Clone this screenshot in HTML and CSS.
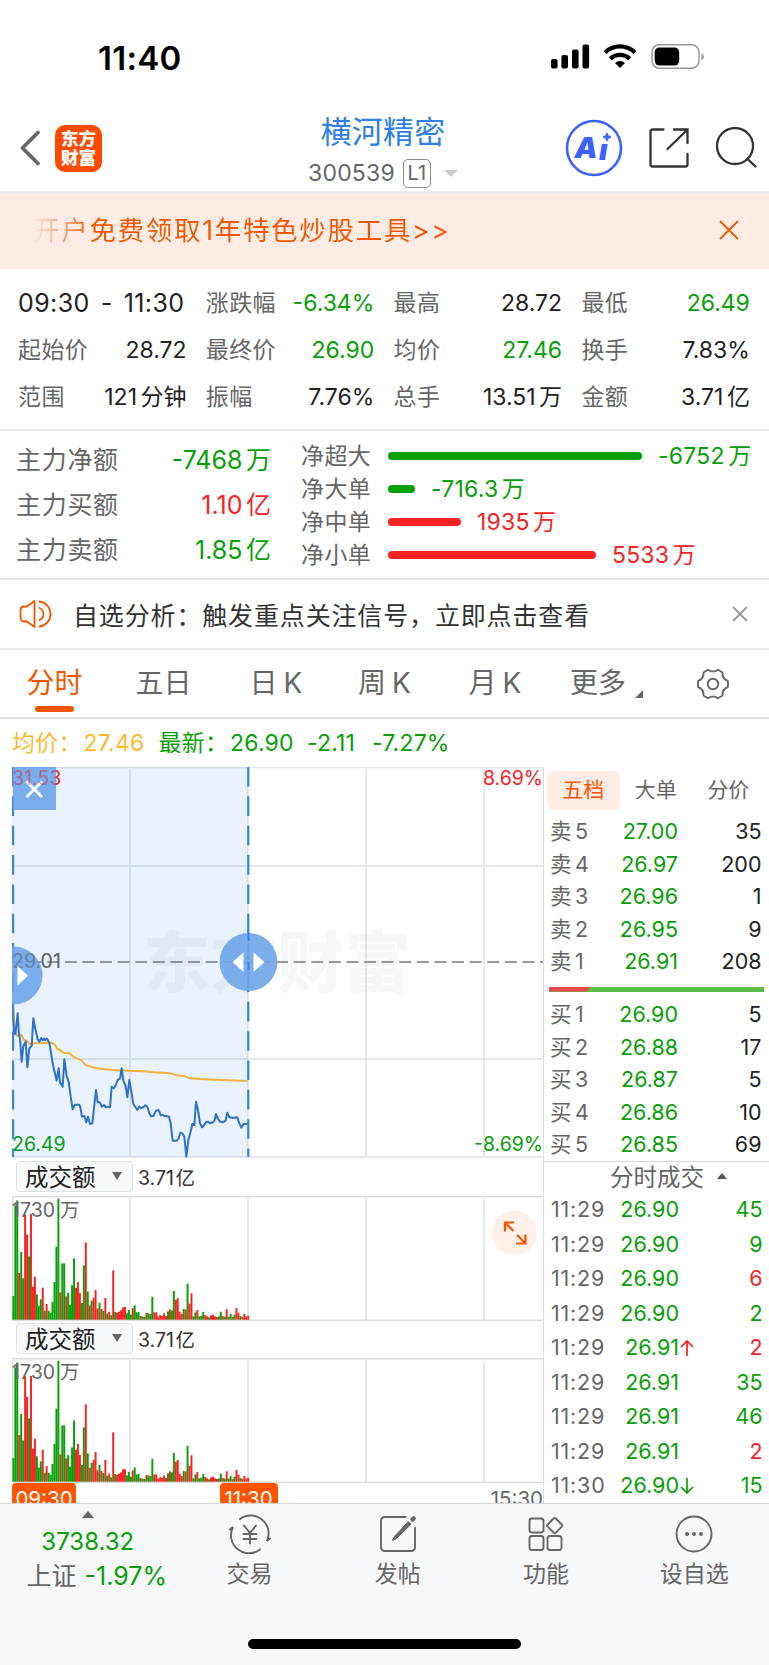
FILE: index.html
```html
<!DOCTYPE html>
<html lang="zh-CN">
<head>
  <meta charset="UTF-8" />
  <meta name="viewport" content="width=device-width, initial-scale=1.0"/>
  <title>横河精密 300539</title>
  <link rel="stylesheet" href="styles.css">
</head>
<body>
  <div class="status-bar">
    <span class="clock">11:40</span>
    <svg class="status-icons" width="154" height="26" viewBox="0 0 154 26">
      <rect x="0" y="15" width="6.6" height="9.5" rx="2"/>
      <rect x="10.4" y="11" width="6.6" height="13.5" rx="2"/>
      <rect x="21" y="5.5" width="6.6" height="19" rx="2"/>
      <rect x="31.5" y="0.5" width="6.6" height="24" rx="2"/>
      <g fill="none" stroke="#000" stroke-width="4.2">
        <path d="M54 8.500a21.500 21.500 0 0 1 30 0"/>
        <path d="M59.200 14.800a14 14 0 0 1 19.600 0"/>
      </g>
      <path d="M69 24l-5-5a7.300 7.300 0 0 1 10 0z"/>
      <rect x="101" y="0.7" width="47" height="23.6" rx="7.5" fill="none" stroke="#999" stroke-width="1.5"/>
      <rect x="103.7" y="3.4" width="24.5" height="18.2" rx="5"/>
      <path d="M150.500 9v7.500q2.500-1.200 2.500-3.700t-2.500-3.800z" fill="#999"/>
    </svg>
  </div>

  <div class="header">
    <div class="header-left">
      <svg width="22" height="36" viewBox="0 0 22 36"><path d="M19 2.500L3.500 18l15.500 15.500" fill="none" stroke="#666" stroke-width="3.6" stroke-linecap="round" stroke-linejoin="round"/></svg>
      <div class="logo">东方<br>财富</div>
    </div>
    <div class="header-title">
      <div class="stock-name">横河精密</div>
      <div class="stock-code">300539<span class="level">L1</span><i class="tri-down"></i></div>
    </div>
    <div class="header-right">
      <svg width="58" height="58" viewBox="0 0 58 58">
        <circle cx="29" cy="29" r="27" fill="none" stroke="#3a63ff" stroke-width="2.6"/>
        <text x="9.5" y="39" class="ai-text">A</text>
        <text x="34" y="40.5" class="ai-text">ı</text>
        <path d="M42 14l1.300 2.700 2.700 1.300-2.700 1.300-1.300 2.700-1.300-2.700-2.700-1.300 2.700-1.300z" fill="#3a63ff" stroke="#3a63ff"/>
      </svg>
      <svg width="42" height="42" viewBox="0 0 42 42" fill="none" stroke="#333" stroke-width="2.3" stroke-linecap="round">
        <path d="M15.500 2.500H4.500q-2 0-2 2v33q0 2 2 2h33q2 0 2-2V27"/>
        <path d="M26 2.500h13.500v13.500M39 3L19.500 22"/>
      </svg>
      <svg width="42" height="42" viewBox="0 0 42 42" fill="none" stroke="#333" stroke-width="2.3" stroke-linecap="round">
        <circle cx="20" cy="19" r="18"/><path d="M32.500 32l8 7.500"/>
      </svg>
    </div>
  </div>

  <div class="promo">
    <span class="promo-text">开户免费领取1年特色炒股工具&gt;&gt;</span>
    <svg width="20" height="20" viewBox="0 0 20 20"><path d="M1 1l18 18M19 1L1 19" stroke="#f25700" stroke-width="1.8"/></svg>
  </div>

  <div class="stats">
    <div class="stat range"><b>09:30</b><b>-</b><b>11:30</b></div>
    <div class="stat"><span>涨跌幅</span><b class="down">-6.34%</b></div>
    <div class="stat"><span>最高</span><b>28.72</b></div>
    <div class="stat"><span>最低</span><b class="down">26.49</b></div>
    <div class="stat"><span>起始价</span><b>28.72</b></div>
    <div class="stat"><span>最终价</span><b class="down">26.90</b></div>
    <div class="stat"><span>均价</span><b class="down">27.46</b></div>
    <div class="stat"><span>换手</span><b>7.83%</b></div>
    <div class="stat"><span>范围</span><b>121<em>分钟</em></b></div>
    <div class="stat"><span>振幅</span><b>7.76%</b></div>
    <div class="stat"><span>总手</span><b>13.51<em>万</em></b></div>
    <div class="stat"><span>金额</span><b>3.71<em>亿</em></b></div>
  </div>

  <div class="funds">
    <div class="main-funds">
      <div class="fund"><span>主力净额</span><b class="down">-7468<em>万</em></b></div>
      <div class="fund"><span>主力买额</span><b class="up">1.10<em>亿</em></b></div>
      <div class="fund"><span>主力卖额</span><b class="down">1.85<em>亿</em></b></div>
    </div>
    <div class="net-funds">
      <div class="net down"><span>净超大</span><i style="width:254px"></i><b>-6752<em>万</em></b></div>
      <div class="net down"><span>净大单</span><i style="width:27px"></i><b>-716.3<em>万</em></b></div>
      <div class="net up"><span>净中单</span><i style="width:73px"></i><b>1935<em>万</em></b></div>
      <div class="net up"><span>净小单</span><i style="width:208px"></i><b>5533<em>万</em></b></div>
    </div>
  </div>

  <div class="notice">
    <svg width="34" height="30" viewBox="0 0 34 30" fill="none" stroke="#f25700" stroke-width="1.8" stroke-linejoin="round" stroke-linecap="round">
      <path d="M15.500 2v26l-7.500-5.500H4.500q-3-.5-3-4v-7q0-3.500 3-4H8z"/>
      <path d="M20.500 2.500a12.600 12.600 0 0 1 0 25M20.500 9a6.500 6.500 0 0 1 0 12"/>
    </svg>
    <span class="notice-text">自选分析：触发重点关注信号，立即点击查看</span>
    <svg width="16" height="16" viewBox="0 0 16 16"><path d="M1 1l14 14M15 1L1 15" stroke="#999" stroke-width="1.8"/></svg>
  </div>

  <div class="tabs">
    <span class="tab active">分时</span>
    <span class="tab">五日</span>
    <span class="tab">日<em>K</em></span>
    <span class="tab">周<em>K</em></span>
    <span class="tab">月<em>K</em></span>
    <span class="tab more">更多</span>
    <svg class="gear" width="34" height="34" viewBox="0 0 34 34" fill="none" stroke="#666" stroke-width="1.9" stroke-linejoin="round">
      <path d="M12 2.800Q17 6.500 22 2.800L26.500 5.500Q25.800 11.500 31.800 14Q32.500 17 31.800 20Q25.800 22.500 26.500 28.500L22 31.200Q17 27.500 12 31.200L7.500 28.500Q8.200 22.500 2.200 20Q1.500 17 2.200 14Q8.200 11.500 7.500 5.500Z"/>
      <circle cx="17" cy="17" r="5.3"/>
    </svg>
  </div>

  <div class="quote">
    <span class="avg">均价：</span><span class="avg num1">27.46</span>
    <span class="down lab2">最新：</span><span class="down num2">26.90</span>
    <span class="down num3">-2.11</span><span class="down">-7.27%</span>
  </div>

  <div class="main">
    <div class="charts">
      <svg class="price-chart" width="532" height="391" viewBox="0 0 532 391">
        <g stroke="#e6e9f0" stroke-width="2">
          <path d="M118 2v387M236 0v390M354 2v387M472 2v387M0 99h531M0 292h531"/>
        </g>
        <path d="M0 .500h532M0 390h532" stroke="#e3e3e6" stroke-width="1.5"/>
        <text x="131" y="220" class="watermark">东方财富</text>
        <text x="0" y="18" class="axis up">31.53</text>
        <text x="531" y="18" class="axis up" text-anchor="end">8.69%</text>
        <path d="M0 195h531" stroke="#777" stroke-width="1.3" stroke-dasharray="12 5.6"/>
        <text x="0" y="201" class="axis">29.01</text>
        <text x="0" y="384" class="axis down">26.49</text>
        <text x="531" y="384" class="axis down" text-anchor="end">-8.69%</text>
        <rect x="0" y="0" width="236" height="390" fill="#2f80e8" fill-opacity=".1"/>
        <g transform="translate(-12 -7) scale(.33333)" fill="none" stroke-width="6" stroke-linejoin="round">
          <polyline stroke="#efb23d" points="40,745 44,800 50,828 64,824 72,840 80,842 90,852 105,850 155,848 165,855 172,866 180,870 190,878 208,880 220,890 232,896 245,902 255,914 270,919 285,924 310,927 335,930 380,932 430,934 460,937 500,939 515,941 530,946 555,949 570,955 600,957 650,959 742,963"/>
          <polyline stroke="#2d72c9" points="38,745 42,820 46,822 50,790 53,760 57,825 60,835 65,905 70,858 77,845 82,922 88,865 95,858 100,775 106,808 113,838 118,845 124,834 128,840 132,836 136,840 141,836 148,848 154,885 160,920 170,962 176,925 180,968 188,980 193,898 200,948 206,965 212,1010 218,1048 224,1034 238,1034 241,1042 246,1070 253,1068 259,1087 264,1070 270,1092 277,1090 283,1035 288,990 293,1027 299,1027 306,1040 312,1035 318,1042 323,1040 330,1042 335,980 341,985 347,976 353,960 360,955 365,925 370,962 377,978 382,1012 388,960 394,995 400,1032 412,1050 418,1040 424,1044 430,1042 436,1036 442,1040 448,1060 453,1069 460,1068 468,1052 476,1050 482,1066 488,1064 494,1069 500,1068 507,1070 512,1090 518,1142 530,1142 536,1135 541,1118 547,1120 553,1130 559,1190 565,1140 571,1118 577,1092 583,1095 588,1025 594,1050 600,1090 606,1102 612,1096 618,1087 625,1085 630,1090 640,1086 644,1080 648,1062 653,1075 660,1085 667,1087 677,1082 682,1058 688,1072 700,1074 712,1072 718,1090 724,1103 730,1092 742,1092"/>
        </g>
        <path d="M1 0v390M236.300 0v390" stroke="#3584e4" stroke-width="2.2" stroke-dasharray="19.6 9.75"/>
        <rect x="1" y="0" width="43" height="43" fill="#6ea5ea" fill-opacity=".9"/>
        <path d="M14.500 14.500l15.500 15.500M30 14.500L14.500 30" stroke="#fff" stroke-width="2.8"/>
        <text x="0" y="18" class="axis up" opacity=".4">31.53</text>
        <circle cx="1.5" cy="208.5" r="29" fill="#6ea5ea" fill-opacity=".9"/>
        <text x="0" y="201" class="axis" opacity=".5">29.01</text>
        <path d="M5.500 199v19.500l10.500-9.750z" fill="#fff"/>
        <circle cx="236.5" cy="195" r="29" fill="#6ea5ea" fill-opacity=".9"/>
        <path d="M236.500 166v58" stroke="#3584e4" stroke-width="2" stroke-dasharray="8 21"/>
        <path d="M231.500 185.500v19.500l-11-9.750zM241.500 185.500v19.500l11-9.750z" fill="#fff"/>
      </svg>

      <div class="vol-head"><span class="select">成交额<i></i></span><span class="vol-sum">3.71<em>亿</em></span></div>
      <svg class="vol-chart" width="532" height="125" viewBox="0 0 532 125">
        <path d="M118 3v121M236 3v121M354 3v121M472 3v121" stroke="#e3e7ee" stroke-width="2"/>
        <path d="M0 .750h532M0 124.250h532M.500 0v124" stroke="#dcdde2" stroke-width="1.5"/>
        <g class="bars"></g>
        <text x="0" y="21" class="axis">1730</text><text x="48" y="21" class="axis">万</text>
        <circle cx="502.5" cy="37" r="22.5" fill="#fff0e9"/>
        <path d="M493 35.500v-9h9M493 26.500l8.500 8.500M504 47.500h9.500v-9M513 47l-8-8" fill="none" stroke="#f25700" stroke-width="2.2"/>
      </svg>

      <div class="vol-head"><span class="select">成交额<i></i></span><span class="vol-sum">3.71<em>亿</em></span></div>
      <svg class="vol-chart" width="532" height="125" viewBox="0 0 532 125">
        <path d="M118 3v121M236 3v121M354 3v121M472 3v121" stroke="#e3e7ee" stroke-width="2"/>
        <path d="M0 .750h532M0 124.250h532M.500 0v124" stroke="#dcdde2" stroke-width="1.5"/>
        <g class="bars"></g>
        <text x="0" y="21" class="axis">1730</text><text x="48" y="21" class="axis">万</text>
      </svg>

      <div class="times"><span class="mark first">09:30</span><span class="mark">11:30</span><span class="end">15:30</span></div>
    </div>

    <div class="panel">
      <div class="panel-tabs"><span class="on">五档</span><span>大单</span><span>分价</span></div>
      <div class="levels" id="sells"></div>
      <div class="ratio"><i></i></div>
      <div class="levels" id="buys"></div>
      <div class="deals-title">分时成交<i></i></div>
      <div id="deals"></div>
    </div>
  </div>

  <div class="nav">
    <div class="index">
      <i class="tri-up"></i>
      <div class="index-value down">3738.32</div>
      <div class="index-change">上证<b class="down">-1.97%</b></div>
    </div>
    <div class="nav-item">
      <svg width="44" height="40" viewBox="0 0 44 40" fill="none" stroke="#666" stroke-width="1.9" stroke-linecap="round">
        <path d="M12 5A18 18 0 0 1 39 27l3-2.500M32 35.500A18 18 0 0 1 5 13l-3 2.500"/>
        <path d="M16 11.500l6 7.500 6-7.500M22 19v10.500M15.500 20h13M15.500 25h13"/>
      </svg>
      <span>交易</span>
    </div>
    <div class="nav-item">
      <svg width="44" height="40" viewBox="0 0 44 40" fill="none" stroke="#666" stroke-width="1.9" stroke-linecap="round">
        <path d="M29.500 3H9Q5 3 5 7v26q0 4 4 4h26q4 0 4-4V14"/>
        <path d="M36.500 5.500l1-1" stroke-width="4.5"/>
        <path d="M32.500 7.800L35 10.300 20.500 24.500l-4 2 2-4z" fill="#666" stroke-width="1"/>
      </svg>
      <span>发帖</span>
    </div>
    <div class="nav-item">
      <svg width="44" height="40" viewBox="0 0 44 40" fill="none" stroke="#666" stroke-width="1.9" stroke-linejoin="round">
        <rect x="5.5" y="4.5" width="14" height="14" rx="2.5"/>
        <rect x="5.5" y="22" width="14" height="14" rx="2.5"/>
        <rect x="23.5" y="22" width="14" height="14" rx="2.5"/>
        <rect x="25" y="5.8" width="11.5" height="11.5" rx="1.5" transform="rotate(45 30.7 11.5)"/>
      </svg>
      <span>功能</span>
    </div>
    <div class="nav-item">
      <svg width="44" height="40" viewBox="0 0 44 40">
        <circle cx="22" cy="20" r="17.5" fill="none" stroke="#666" stroke-width="1.9"/>
        <circle cx="15" cy="20" r="2" fill="#666"/><circle cx="22" cy="20" r="2" fill="#666"/><circle cx="29" cy="20" r="2" fill="#666"/>
      </svg>
      <span>设自选</span>
    </div>
    <div class="home-bar"></div>
  </div>

  <script src="app.js"></script>
</body>
</html>
```
FILE: styles.css
```css
* {
  box-sizing: border-box;
}
body {
  margin: 0;
  width: 769px;
  height: 1665px;
  overflow: hidden;
  background: #fff;
  color: #222;
  font-family: Inter, 'Noto Sans CJK SC', sans-serif;
  font-size: 23px;
}
b, i, em {
  font-weight: normal;
  font-style: normal;
}
svg {
  display: block;
  flex: none;
}
.up {
  color: #f72323;
  fill: #f72323;
}
.down {
  color: #06a006;
  fill: #06a006;
}

/* status bar */
.status-bar {
  display: flex;
  justify-content: space-between;
  align-items: center;
  height: 114px;
  padding: 0 64px 0 98px;
}
.clock {
  padding-top: 2px;
  font-size: 33px;
  font-weight: 600;
  color: #000;
  letter-spacing: 0.3px;
}

/* header */
.header {
  display: grid;
  grid-template-columns: 1fr auto 1fr;
  height: 79px;
  padding: 0 12px 0 19px;
  border-bottom: 2px solid #ececec;
}
.header-left, .header-right {
  display: flex;
  align-items: center;
  height: 68px;
}
.header-right {
  justify-content: flex-end;
  gap: 25px;
}
.logo {
  width: 47px;
  height: 47px;
  margin-left: 14px;
  padding-top: 4px;
  border-radius: 10px;
  background: #ff4a00;
  color: #fff;
  font-size: 17.5px;
  font-weight: 900;
  line-height: 19px;
  text-align: center;
}
.header-title {
  margin: 0 5px 0 -5px;
  text-align: center;
}
.stock-name {
  height: 42px;
  line-height: 35px;
  font-size: 31px;
  letter-spacing: 0.3px;
  color: #2f80e8;
}
.stock-code {
  display: flex;
  align-items: center;
  height: 34px;
  color: #666;
  letter-spacing: 0.2px;
}
.level {
  width: 28px;
  height: 29px;
  margin-left: 8px;
  border: 1.5px solid #888;
  border-radius: 5px;
  line-height: 27px;
  font-size: 20px;
}
.tri-down {
  margin-left: 13px;
  border: 7px solid transparent;
  border-top-color: #ccc;
  border-bottom: 0;
}
.ai-text {
  font-size: 29px;
  font-weight: 900;
  font-style: italic;
  fill: #3a63ff;
}

.promo {
  display: flex;
  justify-content: space-between;
  align-items: center;
  height: 76px;
  padding: 0 30px 2px 33px;
  background: #fdece6;
}
.promo-text {
  margin-top: -3px;
  font-size: 26.5px;
  letter-spacing: 1.7px;
  background: linear-gradient(90deg, #fdece6, #f25700 60px);
  background-clip: text;
  -webkit-background-clip: text;
  color: transparent;
}

/* range statistics */
.stats {
  display: grid;
  grid-template-columns: repeat(4, 168.5px);
  grid-auto-rows: 47px;
  column-gap: 19.3px;
  height: 162px;
  padding: 10px 0 0 18px;
  border-bottom: 2px solid #ececec;
}
.stat {
  display: flex;
  justify-content: space-between;
  align-items: center;
  line-height: 30px;
}
.stat span, .fund span, .net span {
  color: #666;
  letter-spacing: 0.4px;
}
.range {
  padding-right: 2px;
  font-size: 25px;
}
.range b {
  letter-spacing: 0.4px;
}

.funds {
  display: flex;
  height: 149px;
  border-bottom: 2px solid #e4e4e4;
}
.main-funds {
  width: 301px;
  padding: 6px 30px 0 16px;
}
.fund {
  display: flex;
  justify-content: space-between;
  align-items: center;
  height: 45px;
  font-size: 25px;
  line-height: 30px;
}
.fund span {
  letter-spacing: 0.7px;
}
.net-funds {
  padding-top: 8px;
}
.net {
  display: flex;
  align-items: center;
  height: 33.2px;
  line-height: 30px;
}
.net span {
  width: 87px;
}
.net i {
  height: 8px;
  margin-right: 16px;
  border-radius: 4px;
  background: #f72323;
}
.net.down i {
  background: #06a006;
}
.net b {
  letter-spacing: 0.2px;
}
em {
  margin-left: 3.5px;
}

.notice {
  display: flex;
  align-items: center;
  height: 70px;
  padding: 0 21px 0 19px;
  border-bottom: 2px solid #ececec;
  color: #333;
}
.notice-text {
  flex: 1;
  margin-left: 20px;
  font-size: 25px;
  letter-spacing: 0.85px;
}

/* period tabs */
.tabs {
  display: grid;
  grid-template-columns: 109px 109px 116px 101px 120px 86px 128px;
  height: 69px;
  border-bottom: 2px solid #dddfe6;
  color: #666;
  font-size: 28px;
  line-height: 67px;
  text-align: center;
}
.tab {
  position: relative;
}
.tab em {
  margin-left: 6px;
}
.tab.active {
  color: #f25700;
}
.tab.active::after {
  content: '';
  position: absolute;
  left: 35px;
  bottom: 5px;
  width: 39px;
  height: 6px;
  border-radius: 3px;
  background: #f25700;
}
.more::after {
  content: '';
  position: absolute;
  right: -2px;
  bottom: 19px;
  border-left: 8px solid transparent;
  border-bottom: 8px solid #666;
}
.gear {
  align-self: center;
  margin-left: 55px;
}

.quote {
  display: flex;
  align-items: center;
  height: 48px;
  padding-left: 12px;
  line-height: 30px;
  letter-spacing: 0.2px;
}
.avg {
  color: #fdb92e;
}
.avg:first-child, .lab2 {
  width: 71.5px;
}
.num1 {
  width: 75px;
}
.num2 {
  width: 77px;
}
.num3 {
  width: 65px;
}

/* charts and order book */
.main {
  display: flex;
  height: 736px;
  overflow: hidden;
}
.charts {
  width: 544px;
  padding-left: 12px;
  border-right: 1.5px solid #dcdde2;
}
.axis {
  font-size: 19.5px;
  fill: #666;
}
.axis.up {
  fill: #f72323;
}
.axis.down {
  fill: #06a006;
}
.watermark {
  font-size: 67px;
  font-weight: 900;
  fill: #000;
  fill-opacity: 0.03;
}
.vol-head {
  display: flex;
  align-items: center;
  height: 37.5px;
  padding: 0 0 1px 4px;
}
.select {
  display: flex;
  align-items: center;
  justify-content: space-between;
  width: 117px;
  height: 31px;
  padding: 0 10px 1px 8px;
  border: 1.5px solid #dfe1e6;
  border-radius: 4px;
  background: #f7f8fa;
  font-size: 23.5px;
}
.select i {
  border: 5px solid transparent;
  border-top: 8px solid #666;
  border-bottom: 0;
}
.vol-sum {
  margin-left: 5px;
  font-size: 19.5px;
  color: #333;
}
.vol-sum em {
  margin-left: 1.5px;
}
.times {
  display: flex;
  height: 40px;
  color: #fff;
  font-size: 20.5px;
  line-height: 32px;
}
.mark {
  width: 58px;
  height: 30px;
  border-radius: 4px;
  background: #ff5500;
  text-align: center;
}
.mark.first {
  width: 64px;
  margin-right: 143.5px;
}
.end {
  margin-left: auto;
  color: #666;
}

.panel {
  flex: 1;
}
.panel-tabs {
  display: flex;
  height: 48px;
  padding: 4px 5px 0 3px;
}
.panel-tabs span {
  width: 72.5px;
  height: 39px;
  border-radius: 6px;
  color: #666;
  font-size: 21px;
  line-height: 38px;
  text-align: center;
}
.panel-tabs .on {
  background: #ffece4;
  color: #ff5500;
}
.level-row, .deal-row {
  display: grid;
  grid-template-columns: 64px 64px 1fr;
  align-items: center;
  height: 32.5px;
  padding: 0 8px 0 6px;
  font-size: 21.5px;
  line-height: 30px;
}
.level-row span, .deal-row span {
  color: #666;
}
.level-row em {
  margin-left: 3.5px;
}
.level-row b, .deal-row b {
  text-align: right;
}
.ratio {
  height: 5px;
  margin: 9px 6px 6.5px 5px;
  background: #5cba47;
}
.ratio i {
  display: block;
  width: 42px;
  height: 5px;
  background: #e94b4b;
  clip-path: polygon(0 0, 100% 0, 38px 100%, 0 100%);
}
.deals-title {
  display: flex;
  align-items: center;
  height: 31.5px;
  padding: 0 0 2px 66px;
  border-top: 1.5px solid #d8dade;
  color: #666;
  font-size: 23.5px;
}
.deals-title i {
  margin-left: 13px;
  border: 5px solid transparent;
  border-bottom: 6px solid #555;
  border-top: 0;
}
.deal-row {
  height: 34.5px;
  padding: 0 7px 0 7px;
}
.deal-row span {
  letter-spacing: 0.8px;
}
.deal-price {
  position: relative;
}
.deal-price svg {
  position: absolute;
  left: 100%;
  top: 7px;
  margin-left: 1px;
}

/* bottom bar */
.nav {
  position: relative;
  display: grid;
  grid-template-columns: 175.5px repeat(4, 148.2px);
  height: 162px;
  border-top: 1.5px solid #d4d6da;
  background: #f7f8fa;
  color: #666;
}
.index {
  text-align: center;
}
.tri-up {
  display: block;
  width: 0;
  margin: 7px auto 0;
  border: 6.5px solid transparent;
  border-bottom: 7px solid #666;
  border-top: 0;
}
.index-value {
  margin-top: 7px;
  font-size: 24px;
  line-height: 34px;
}
.index-change {
  padding-left: 18px;
  font-size: 25px;
  line-height: 34px;
}
.index-change b {
  margin-left: 8px;
}
.nav-item {
  display: flex;
  flex-direction: column;
  align-items: center;
  padding-top: 10px;
}
.nav-item span {
  margin-top: 4px;
  line-height: 32px;
}
.home-bar {
  position: absolute;
  left: 248px;
  bottom: 16px;
  width: 273px;
  height: 10px;
  border-radius: 5px;
  background: #000;
}
```
FILE: app.js
```js
// turnover per minute, 09:30 - 11:30: height + colour
const volumes = '71g 343g 358g 140r 203g 124g 316r 255r 190g 317r 99r 129r 76g 42g 61g 96r 27g 47r 27g 21g ' +
  '53g 113g 219g 363g 82r 169g 169g 70r 80g 45g 103g 184g 96r 113r 80r 50g 163g 232r 85g 42r 57g 66r 89r 34r 51g 32r 26g 65r 18g 24r ' +
  '13g 148r 23g 21r 24r 28r 37r 38r 19g 29g 15g 34r 43g 22g 23g 11r 9g 9g 20r 19g 17g 69g 22r 22r 9r 14r 11r 19r 11r 25g ' +
  '31r 28g 86g 60r 65r 24r 17r 32g 31r 108g 48r 79r 10g 22g 29r 10g 12g 23g 14r 10r 7g 13r 15r 10r 8r 10g 24g 11r 9g 31r ' +
  '9g 17g 8r 15g 35r 21r 11g 8r 17r 9r 12r';

const bars = volumes.split(' ').map((v, i) => {
  const h = parseInt(v) / 3;
  const color = v.endsWith('r') ? '#f72323' : '#06a006';
  return `<rect x="${(0.4 + i * 1.957).toFixed(2)}" y="${(123.7 - h).toFixed(2)}" width="1.96" height="${h.toFixed(2)}" fill="${color}"/>`;
}).join('');
document.querySelectorAll('.bars').forEach(g => g.innerHTML = bars);

const sells = [[5, '27.00', 35], [4, '26.97', 200], [3, '26.96', 1], [2, '26.95', 9], [1, '26.91', 208]];
const buys = [[1, '26.90', 5], [2, '26.88', 17], [3, '26.87', 5], [4, '26.86', 10], [5, '26.85', 69]];

function levelRows(name, rows) {
  return rows.map(([n, price, count]) =>
    `<div class="level-row"><span>${name}<em>${n}</em></span><b class="down">${price}</b><b>${count}</b></div>`).join('');
}
document.getElementById('sells').innerHTML = levelRows('卖', sells);
document.getElementById('buys').innerHTML = levelRows('买', buys);

const deals = [
  ['11:29', '26.90', 45, 'down'],
  ['11:29', '26.90', 9, 'down'],
  ['11:29', '26.90', 6, 'up'],
  ['11:29', '26.90', 2, 'down'],
  ['11:29', '26.91', 2, 'up', 'M7 17V2M1 8l6-6 6 6', '#f72323'],
  ['11:29', '26.91', 35, 'down'],
  ['11:29', '26.91', 46, 'down'],
  ['11:29', '26.91', 2, 'up'],
  ['11:30', '26.90', 15, 'down', 'M7 1v15M1 10l6 6 6-6', '#06a006']
];
document.getElementById('deals').innerHTML = deals.map(([time, price, count, dir, arrow, color]) => {
  const icon = arrow ? `<svg width="14" height="18" viewBox="0 0 14 18"><path d="${arrow}" fill="none" stroke="${color}" stroke-width="1.7"/></svg>` : '';
  return `<div class="deal-row"><span>${time}</span><b class="down deal-price">${price}${icon}</b><b class="${dir}">${count}</b></div>`;
}).join('');
```
